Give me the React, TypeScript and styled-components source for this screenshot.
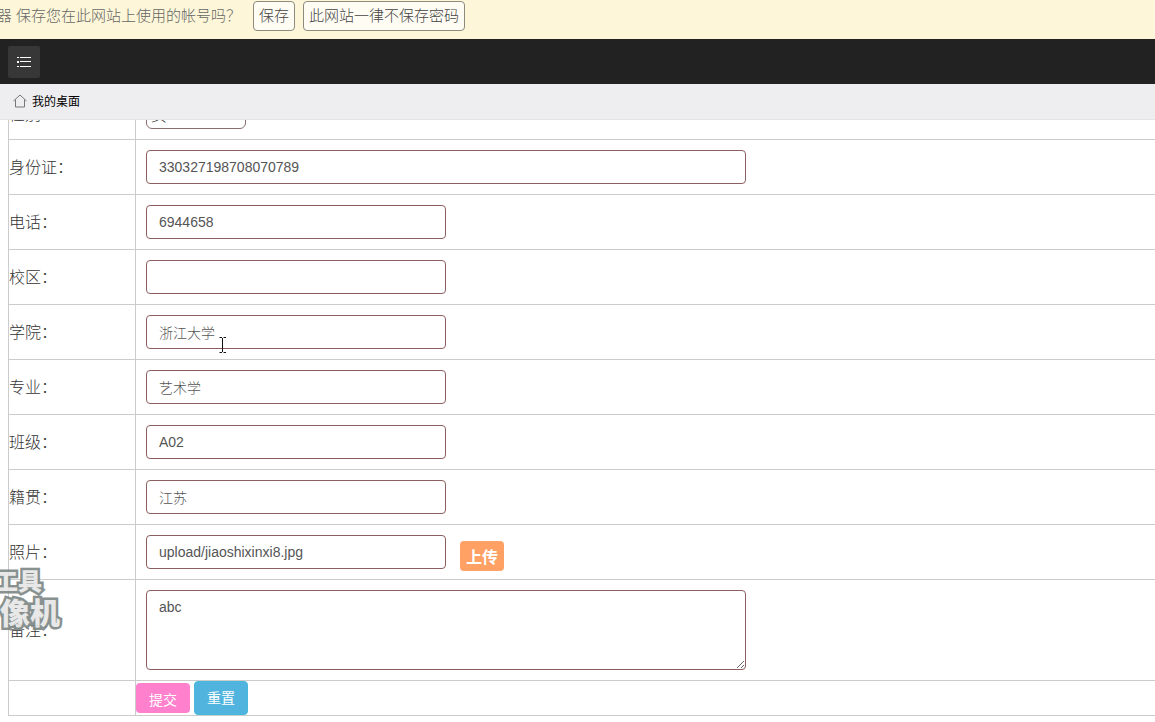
import React from "react";
import styled, { createGlobalStyle } from "styled-components";

const GlobalStyle = createGlobalStyle`
  *, *::before, *::after { box-sizing: border-box; }
  html, body { margin: 0; height: 100%; overflow: hidden; background: #fff; }
  #root { height: 100%; }
  body, button, input, select, textarea {
    font-family: "Liberation Sans", "Noto Sans CJK SC", sans-serif;
  }
`;

const Page = styled.div`
  display: flex;
  flex-direction: column;
  height: 100vh;
  overflow: hidden;
`;

const PasswordBar = styled.div`
  display: flex;
  align-items: flex-start;
  gap: 8px;
  flex: none;
  height: 39px;
  padding-top: 1px;
  background: #fdf6d8;
  color: #666;
  font-size: 15px;
  font-weight: 300;
  line-height: 30px;
  white-space: nowrap;
`;

const Prompt = styled.p`
  display: flex;
  justify-content: flex-end;
  flex: none;
  width: 245px;
  margin: 0;
  padding-right: 4px;
  overflow: hidden;
`;

const BarButton = styled.button`
  height: 30px;
  padding: 0 5px;
  border: 1px solid #8d8b80;
  border-radius: 4px;
  background: #fffdf3;
  color: #444;
  font-size: 15px;
  font-weight: 300;
  line-height: 26px;
`;

const Header = styled.header`
  display: flex;
  align-items: center;
  flex: none;
  height: 45px;
  padding: 0 8px;
  background: #222;
`;

const MenuButton = styled.button`
  display: grid;
  place-items: center;
  width: 32px;
  height: 32px;
  padding: 0;
  border: 0;
  border-radius: 2px;
  background: #373737;
  color: #fff;
`;

const TabBar = styled.nav`
  display: flex;
  align-items: center;
  flex: none;
  height: 36px;
  padding: 0 0 2px 13px;
  border-bottom: 1px solid #e4e4e6;
  background: #eeeef0;
`;

const Tab = styled.a`
  display: flex;
  align-items: center;
  gap: 5px;
  color: #000;
  font-size: 12px;
  text-decoration: none;
`;

const Content = styled.main`
  position: relative;
  flex: 1;
  min-height: 0;
  overflow: hidden;
`;

const FormTable = styled.table`
  width: 100%;
  margin: -32px 0 0 8px;
  border-collapse: collapse;
  color: #333;
  font-size: 16px;
`;

const LabelCell = styled.th`
  width: 127px;
  padding: 0 0 2px;
  border: 1px solid #ccc;
  font-weight: 300;
  text-align: left;
`;

const FieldCell = styled.td<{ $flush?: boolean }>`
  padding: ${(p) => (p.$flush ? "0" : "10px")};
  border: 1px solid #ccc;
`;

const FieldRow = styled.div`
  display: flex;
  align-items: flex-start;
  gap: 14px;
  height: 34px;
`;

const TextInput = styled.input<{ $wide?: boolean }>`
  display: block;
  width: ${(p) => (p.$wide ? 600 : 300)}px;
  height: 34px;
  padding: 6px 12px;
  border: 1px solid #8b5f5f;
  border-radius: 4px;
  background: #fff;
  color: #555;
  font-size: 14px;
  font-weight: 300;
`;

const Select = styled.select`
  appearance: none;
  display: block;
  width: 100px;
  height: 30px;
  padding: 2px 4px 0;
  border: 1px solid #8b6f6f;
  border-radius: 6px;
  background: #fff;
  color: #333;
  font-size: 16px;
  font-weight: 300;
`;

const TextArea = styled.textarea`
  display: block;
  width: 600px;
  height: 80px;
  padding: 6px 12px;
  border: 1px solid #8b5f5f;
  border-radius: 4px;
  color: #555;
  font-size: 14px;
  line-height: 20px;
`;

const UploadButton = styled.button`
  width: 44px;
  height: 30px;
  margin-top: 6px;
  padding: 0;
  border: 0;
  border-radius: 4px;
  background: #ffa064;
  color: #fff;
  font-size: 16px;
  font-weight: 700;
`;

const Actions = styled.div`
  display: flex;
  align-items: center;
  gap: 4px;
`;

const ActionButton = styled.button<{ $reset?: boolean }>`
  width: 54px;
  height: ${(p) => (p.$reset ? 34 : 30)}px;
  padding: ${(p) => (p.$reset ? "0 0 2px" : "2px 0 0")};
  border: ${(p) => (p.$reset ? "1px solid #46b8da" : "0")};
  border-radius: 4px;
  background: ${(p) => (p.$reset ? "#50b4de" : "#ff80cc")};
  color: #fff;
  font-size: 14px;
`;

const Watermark = styled.div`
  position: absolute;
  top: 446px;
  left: 0;
  display: flex;
  flex-direction: column;
  width: 60px;
  pointer-events: none;
  color: #e6e6e6;
  font-weight: 900;
  white-space: nowrap;
  opacity: 0.9;
  -webkit-text-stroke: 5px #7c8684;
  paint-order: stroke fill;
`;

const WatermarkLine = styled.span<{ $large?: boolean }>`
  align-self: flex-end;
  margin-right: ${(p) => (p.$large ? 0 : 18)}px;
  font-size: ${(p) => (p.$large ? 30 : 24)}px;
  line-height: 32px;
`;

const Cursor = styled.svg`
  position: absolute;
  top: 217px;
  left: 219px;
  pointer-events: none;
`;

type Field = { id: string; label: string; value: string; wide?: boolean; upload?: boolean };

const fields: Field[] = [
  { id: "idcard", label: "身份证", value: "330327198708070789", wide: true },
  { id: "phone", label: "电话", value: "6944658" },
  { id: "campus", label: "校区", value: "" },
  { id: "college", label: "学院", value: "浙江大学" },
  { id: "major", label: "专业", value: "艺术学" },
  { id: "class", label: "班级", value: "A02" },
  { id: "origin", label: "籍贯", value: "江苏" },
  { id: "photo", label: "照片", value: "upload/jiaoshixinxi8.jpg", upload: true },
];

export default function App() {
  return (
    <Page>
      <GlobalStyle />
      <PasswordBar>
        <Prompt>
          <span>器 保存您在此网站上使用的帐号吗？</span>
        </Prompt>
        <BarButton type="button">保存</BarButton>
        <BarButton type="button">此网站一律不保存密码</BarButton>
      </PasswordBar>
      <Header>
        <MenuButton type="button" aria-label="菜单">
          <svg width="16" height="12" viewBox="0 0 16 12" fill="currentColor" aria-hidden="true">
            <path d="M1 1h2v1H1zM4 1h11v1H4zM1 5h2v2H1zM4 5h11v1H4zM1 10h2v1H1zM4 10h11v1H4z" />
          </svg>
        </MenuButton>
      </Header>
      <TabBar>
        <Tab href="#desktop">
          <svg width="14" height="14" viewBox="0 0 14 14" fill="none" stroke="#777" aria-hidden="true">
            <path d="M.5 7L7 1l6.500 6M2.500 5.500v7.500h9V5.500" />
          </svg>
          我的桌面
        </Tab>
      </TabBar>
      <Content>
        <form>
          <FormTable>
            <tbody>
              <tr>
                <LabelCell scope="row">
                  <label htmlFor="gender">性别：</label>
                </LabelCell>
                <FieldCell>
                  <Select id="gender" defaultValue="女">
                    <option>女</option>
                    <option>男</option>
                  </Select>
                </FieldCell>
              </tr>
              {fields.map((f) => (
                <tr key={f.id}>
                  <LabelCell scope="row">
                    <label htmlFor={f.id}>{f.label}：</label>
                  </LabelCell>
                  <FieldCell>
                    <FieldRow>
                      <TextInput id={f.id} type="text" defaultValue={f.value} $wide={f.wide} />
                      {f.upload && <UploadButton type="button">上传</UploadButton>}
                    </FieldRow>
                  </FieldCell>
                </tr>
              ))}
              <tr>
                <LabelCell scope="row">
                  <label htmlFor="remark">备注：</label>
                </LabelCell>
                <FieldCell>
                  <TextArea id="remark" defaultValue="abc" />
                </FieldCell>
              </tr>
              <tr>
                <LabelCell as="td" />
                <FieldCell $flush>
                  <Actions>
                    <ActionButton type="submit">提交</ActionButton>
                    <ActionButton type="reset" $reset>
                      重置
                    </ActionButton>
                  </Actions>
                </FieldCell>
              </tr>
            </tbody>
          </FormTable>
        </form>
        <Cursor width="8" height="16" viewBox="0 0 8 16" fill="none" stroke="#111" aria-hidden="true">
          <path d="M.5 .5h2.500M4.500 .5h2.500M3.500 1v14M.5 15.500h2.500M4.500 15.500h2.500" />
        </Cursor>
        <Watermark aria-hidden="true">
          <WatermarkLine>工具</WatermarkLine>
          <WatermarkLine $large>像机</WatermarkLine>
        </Watermark>
      </Content>
    </Page>
  );
}
